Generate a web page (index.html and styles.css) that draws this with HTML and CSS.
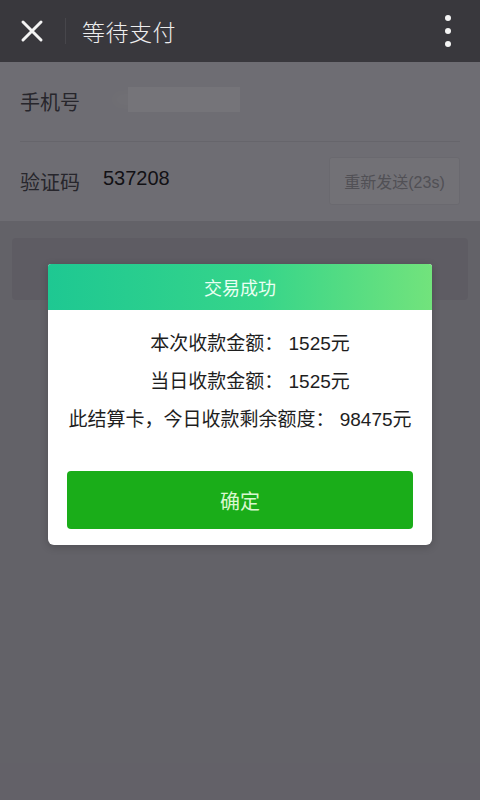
FILE: index.html
```html
<!DOCTYPE html>
<html lang="zh">
<head>
<meta charset="utf-8">
<title>等待支付</title>
<link rel="stylesheet" href="styles.css">
</head>
<body>
<div class="screen">
  <header class="topbar">
    <svg class="close" width="24" height="24" viewBox="0 0 24 24"><path d="M3 3L21 21M21 3L3 21" stroke="#f4f4f4" stroke-width="3" stroke-linecap="round"/></svg>
    <span class="divider"></span>
    <span class="title">等待支付</span>
    <span class="more"><i></i><i></i><i></i></span>
  </header>
  <main class="form">
    <div class="rows">
      <div class="row row-first">
        <span class="label">手机号</span>
        <span class="phone-blur"></span>
      </div>
      <div class="row">
        <span class="label">验证码</span>
        <span class="code">537208</span>
        <span class="resend">重新发送(23s)</span>
      </div>
    </div>
    <div class="pay-btn"></div>
  </main>
  <div class="mask"></div>
  <div class="dialog">
    <div class="dialog-head">交易成功</div>
    <div class="dialog-body">
      <p class="shift">本次收款金额： 1525元</p>
      <p class="shift">当日收款金额： 1525元</p>
      <p>此结算卡，今日收款剩余额度： 98475元</p>
    </div>
    <div class="dialog-foot">
      <div class="ok">确定</div>
    </div>
  </div>
</div>
</body>
</html>
```
FILE: styles.css
```css
html, body {
  margin: 0;
  padding: 0;
}
body {
  width: 480px;
  height: 800px;
  overflow: hidden;
  font-family: "Liberation Sans", "Noto Sans CJK SC", sans-serif;
}
.screen {
  position: relative;
  width: 480px;
  height: 800px;
  background: #d2d1d6;
  overflow: hidden;
}
.topbar {
  height: 62px;
  background: #39383d;
  display: flex;
  align-items: center;
  padding: 0 0 0 20px;
  box-sizing: border-box;
  position: relative;
  z-index: 2;
}
.close {
  display: block;
}
.divider {
  width: 1px;
  height: 26px;
  background: #47464b;
  margin-left: 21px;
}
.title {
  margin-left: 16px;
  color: #ededed;
  font-size: 23px;
  font-family: "Noto Sans CJK SC", sans-serif;
  font-weight: 300;
  letter-spacing: 0.5px;
  flex: 1;
}
.more {
  display: flex;
  flex-direction: column;
  gap: 7px;
  margin-right: 29px;
}
.more i {
  display: block;
  width: 6px;
  height: 6px;
  border-radius: 50%;
  background: #f4f4f4;
}
.form {
  display: flex;
  flex-direction: column;
}
.rows {
  background: #eaeaee;
}
.row {
  height: 79px;
  display: flex;
  align-items: center;
  margin: 0 20px;
}
.row-first {
  border-bottom: 1px solid #d8d8dc;
}
.label {
  font-family: "Noto Sans CJK SC", sans-serif;
  font-size: 20px;
  color: #4a4a4e;
  width: 60px;
}
.phone-blur {
  width: 112px;
  height: 25px;
  margin-left: 48px;
  margin-top: -4px;
  background: #fbfbfc;
  box-shadow: -22px 0 12px -8px rgba(255,255,255,0.45);
}
.code {
  margin-left: 23px;
  margin-top: -6px;
  font-size: 20px;
  color: #1a1a1a;
  flex: 1;
}
.resend {
  width: 131px;
  height: 48px;
  box-sizing: border-box;
  display: flex;
  align-items: center;
  justify-content: center;
  background: #f4f4f6;
  border: 1px solid #e2e2e5;
  border-radius: 3px;
  color: #a8a8ac;
  font-size: 16px;
  margin-top: -2px;
}
.pay-btn {
  margin: 17px 12px 0;
  height: 62px;
  background: #c6c5ca;
  border-radius: 4px;
}
.mask {
  position: absolute;
  left: 0;
  top: 0;
  right: 0;
  bottom: 0;
  background: rgba(12, 10, 18, 0.56);
  z-index: 1;
}
.dialog {
  position: absolute;
  left: 48px;
  top: 264px;
  width: 384px;
  background: #fff;
  border-radius: 3px 3px 6px 6px;
  overflow: hidden;
  z-index: 3;
  box-shadow: 0 2px 8px rgba(0,0,0,0.2);
}
.dialog-head {
  height: 46px;
  display: flex;
  align-items: center;
  justify-content: center;
  background: linear-gradient(90deg, #1ec892 0%, #36d58a 55%, #72e37c 100%);
  color: #eafff2;
  font-family: "Noto Sans CJK SC", sans-serif;
  font-size: 18px;
}
.dialog-body {
  padding: 15px 0 0;
  display: flex;
  flex-direction: column;
  align-items: center;
}
.dialog-body p {
  margin: 0;
  height: 38px;
  line-height: 38px;
  font-size: 19px;
  color: #1e1e1e;
}
.dialog-body p.shift {
  padding-left: 20px;
}
.dialog-foot {
  padding: 32px 19px 16px;
}
.ok {
  height: 58px;
  border-radius: 4px;
  background: #1aad19;
  display: flex;
  align-items: center;
  justify-content: center;
  color: #d9f7cf;
  font-family: "Noto Sans CJK SC", sans-serif;
  font-size: 20px;
}
```
